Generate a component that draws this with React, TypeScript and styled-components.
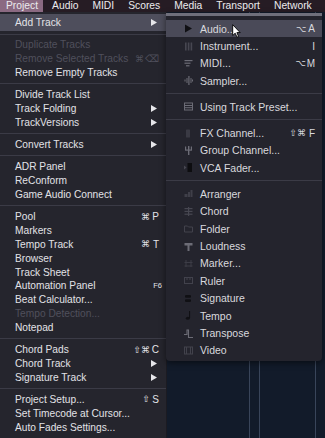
import React from "react";
import styled, { createGlobalStyle } from "styled-components";

type Shortcut = { mods?: string; key: string; small?: boolean };

type MenuEntry =
  | "sep"
  | {
      label: string;
      shortcut?: Shortcut;
      arrow?: boolean;
      disabled?: boolean;
      active?: boolean;
      icon?: string;
    };

const barItems = ["Project", "Audio", "MIDI", "Scores", "Media", "Transport", "Network"];

const projectMenu: MenuEntry[] = [
  { label: "Add Track", arrow: true, active: true },
  "sep",
  { label: "Duplicate Tracks", disabled: true },
  { label: "Remove Selected Tracks", disabled: true, shortcut: { mods: "⌘", key: "⌫" } },
  { label: "Remove Empty Tracks" },
  "sep",
  { label: "Divide Track List" },
  { label: "Track Folding", arrow: true },
  { label: "TrackVersions", arrow: true },
  "sep",
  { label: "Convert Tracks", arrow: true },
  "sep",
  { label: "ADR Panel" },
  { label: "ReConform" },
  { label: "Game Audio Connect" },
  "sep",
  { label: "Pool", shortcut: { mods: "⌘", key: "P" } },
  { label: "Markers" },
  { label: "Tempo Track", shortcut: { mods: "⌘", key: "T" } },
  { label: "Browser" },
  { label: "Track Sheet" },
  { label: "Automation Panel", shortcut: { key: "F6", small: true } },
  { label: "Beat Calculator..." },
  { label: "Tempo Detection...", disabled: true },
  { label: "Notepad" },
  "sep",
  { label: "Chord Pads", shortcut: { mods: "⇧⌘", key: "C" } },
  { label: "Chord Track", arrow: true },
  { label: "Signature Track", arrow: true },
  "sep",
  { label: "Project Setup...", shortcut: { mods: "⇧", key: "S" } },
  { label: "Set Timecode at Cursor..." },
  { label: "Auto Fades Settings..." },
];

const trackMenu: MenuEntry[] = [
  { label: "Audio...", icon: "audio", active: true, shortcut: { mods: "⌥", key: "A" } },
  { label: "Instrument...", icon: "instrument", shortcut: { key: "I" } },
  { label: "MIDI...", icon: "midi", shortcut: { mods: "⌥", key: "M" } },
  { label: "Sampler...", icon: "sampler" },
  "sep",
  { label: "Using Track Preset...", icon: "preset" },
  "sep",
  { label: "FX Channel...", icon: "fx", shortcut: { mods: "⇧⌘", key: "F" } },
  { label: "Group Channel...", icon: "group" },
  { label: "VCA Fader...", icon: "vca" },
  "sep",
  { label: "Arranger", icon: "arranger" },
  { label: "Chord", icon: "chord" },
  { label: "Folder", icon: "folder" },
  { label: "Loudness", icon: "loudness" },
  { label: "Marker...", icon: "marker" },
  { label: "Ruler", icon: "ruler" },
  { label: "Signature", icon: "signature" },
  { label: "Tempo", icon: "tempo" },
  { label: "Transpose", icon: "transpose" },
  { label: "Video", icon: "video" },
];

const GlobalStyle = createGlobalStyle`
  html, body {
    margin: 0;
    padding: 0;
    background: #121b2a;
    overflow: hidden;
  }
  body {
    font-family: "Liberation Sans", Arial, sans-serif;
  }
`;

const Screen = styled.div`
  width: 325px;
  height: 438px;
  display: flex;
  flex-direction: column;
  overflow: hidden;
  position: relative;
`;

const MenuBar = styled.div`
  height: 12px;
  display: flex;
  align-items: center;
  background: #261c24;
  gap: 3px;
`;

const BarItem = styled.div<{ $active?: boolean }>`
  height: 12px;
  line-height: 12px;
  padding: 0 5px 0 6px;
  font-size: 10.3px;
  color: #ecebee;
  background: ${(p) => (p.$active ? "#8b6a82" : "transparent")};
`;

const Workspace = styled.div`
  flex: 1;
  display: flex;
  min-height: 0;
`;

const MainMenu = styled.div`
  width: 167px;
  flex-shrink: 0;
  background: #25252d;
  padding-top: 2px;
  border-right: 1px solid #1b1b22;
  box-sizing: border-box;
`;

const Backdrop = styled.div`
  flex: 1;
  padding-top: 1px;
  background:
    linear-gradient(#39455a, #39455a) 82px 0 / 1px 100% no-repeat,
    linear-gradient(#39455a, #39455a) 92px 0 / 1px 100% no-repeat,
    linear-gradient(#39455a, #39455a) 148px 0 / 1px 100% no-repeat,
    #121b2a;
`;

const SubMenu = styled.div`
  width: 156px;
  margin-left: -1px;
  background: #24242d;
  border-top: 3px solid #6f6f7b;
  padding: 4px 0 2px;
  border-radius: 0 0 4px 4px;
  box-shadow: 0 2px 6px rgba(0, 0, 0, 0.5);
`;

const Row = styled.div<{ $active?: boolean; $disabled?: boolean; $tall?: boolean }>`
  display: flex;
  align-items: center;
  height: ${(p) => (p.$tall ? "17px" : "13.8px")};
  padding: 0 7px 0 15px;
  font-size: 10.2px;
  color: ${(p) => (p.$disabled ? "#50505c" : "#e2e2e7")};
  background: ${(p) => (p.$active ? "#4e4e5c" : "transparent")};
  white-space: nowrap;
`;

const SubRow = styled.div<{ $active?: boolean }>`
  display: flex;
  align-items: center;
  height: 17.4px;
  padding: 0 7px 0 18px;
  font-size: 10.5px;
  color: #d9d9de;
  background: ${(p) => (p.$active ? "#4a4a58" : "transparent")};
  white-space: nowrap;
`;

const Label = styled.span`
  flex: 1;
`;

const IconBox = styled.span`
  width: 9px;
  height: 9px;
  margin-right: 7px;
  display: flex;
`;

const Separator = styled.div<{ $size: number }>`
  height: ${(p) => p.$size}px;
  display: flex;
  align-items: center;
  &::after {
    content: "";
    flex: 1;
    height: 1px;
    background: #3b3b46;
  }
`;

const Keys = styled.span<{ $small?: boolean }>`
  display: flex;
  align-items: center;
  gap: 1px;
  font-size: ${(p) => (p.$small ? "7.5px" : "10px")};
  margin-right: ${(p) => (p.$small ? "-3px" : "0")};
  font-family: "DejaVu Sans", "Liberation Sans", sans-serif;
`;

const Mods = styled.span`
  font-size: 9px;
`;

const KeyCap = styled.span`
  min-width: 8px;
  text-align: right;
  font-family: "Liberation Sans", Arial, sans-serif;
`;

const Arrow = styled.svg`
  width: 6px;
  height: 7px;
  margin-right: 2px;
`;

const Cursor = styled.svg`
  position: absolute;
  left: 232px;
  top: 24px;
  width: 9px;
  height: 14px;
`;

function ShortcutKeys({ shortcut }: { shortcut: Shortcut }) {
  return (
    <Keys $small={shortcut.small}>
      {shortcut.mods && <Mods>{shortcut.mods}</Mods>}
      <KeyCap>{shortcut.key}</KeyCap>
    </Keys>
  );
}

function SubmenuArrow() {
  return (
    <Arrow viewBox="0 0 6 7">
      <path d="M0 0 L6 3.5 L0 7 Z" fill="#e6e6ea" />
    </Arrow>
  );
}

function TrackIcon({ name }: { name: string }) {
  const g = "#6c6c76";
  const d = "#474751";
  let body: React.ReactNode = null;
  switch (name) {
    case "audio":
      body = <path d="M1 0.5 L8 4.5 L1 8.5 Z" fill="#101014" />;
      break;
    case "instrument":
      body = (
        <g fill={d}>
          <rect x="1" y="0.5" width="1.6" height="8" />
          <rect x="3.8" y="0.5" width="1.6" height="8" />
          <rect x="6.6" y="0.5" width="1.6" height="8" />
        </g>
      );
      break;
    case "midi":
      body = (
        <g fill={g}>
          <rect x="0.5" y="1" width="8" height="1.2" />
          <rect x="0.5" y="3.6" width="6" height="1.2" />
          <rect x="2" y="6.2" width="3.5" height="1.2" />
        </g>
      );
      break;
    case "sampler":
      body = (
        <g fill={g}>
          <rect x="0.5" y="3.5" width="1" height="2" />
          <rect x="2.5" y="2" width="1" height="5" />
          <rect x="4.3" y="0" width="1.2" height="9" />
          <rect x="6.5" y="2" width="1" height="5" />
          <rect x="8" y="3.5" width="1" height="2" />
        </g>
      );
      break;
    case "preset":
      body = (
        <g fill="none" stroke={g} strokeWidth="1">
          <rect x="0.5" y="1" width="8" height="7" />
          <path d="M0.5 3.5 H8.5 M0.5 5.7 H8.5" />
        </g>
      );
      break;
    case "fx":
      body = <rect x="2" y="0.5" width="4" height="8" rx="0.5" fill="#3a3a44" />;
      break;
    case "group":
      body = (
        <g fill={g}>
          <rect x="1" y="0.5" width="1.2" height="3.5" />
          <rect x="4" y="0" width="1.4" height="9" />
          <rect x="6.8" y="0.5" width="1.2" height="3.5" />
          <rect x="1" y="3.5" width="7" height="1.2" />
        </g>
      );
      break;
    case "vca":
      body = (
        <g>
          <path d="M0 2.5 L2.5 4.5 L0 6.5 Z" fill={d} />
          <rect x="3.5" y="0" width="4.5" height="9" fill="#0d0d10" />
        </g>
      );
      break;
    case "arranger":
      body = (
        <g fill="#3f3f49">
          <rect x="0.5" y="5" width="3" height="3" />
          <rect x="4" y="3" width="2" height="5" />
          <rect x="6.5" y="1" width="2" height="7" />
        </g>
      );
      break;
    case "chord":
      body = (
        <g fill={d}>
          <rect x="0.5" y="1" width="8" height="1.2" />
          <rect x="0.5" y="3.8" width="8" height="1.2" />
          <rect x="0.5" y="6.6" width="8" height="1.2" />
          <rect x="4" y="0" width="1.2" height="9" />
        </g>
      );
      break;
    case "folder":
      body = (
        <path
          d="M0.5 2 H3.5 L4.5 3 H8.5 V8 H0.5 Z"
          fill="none"
          stroke="#42424c"
          strokeWidth="1"
        />
      );
      break;
    case "loudness":
      body = (
        <g fill={g}>
          <rect x="0.5" y="1" width="8" height="2.5" />
          <rect x="3.5" y="3" width="2" height="6" />
        </g>
      );
      break;
    case "marker":
      body = (
        <g fill="#3c3c46">
          <rect x="0.5" y="3" width="8" height="1" />
          <rect x="0.5" y="6.5" width="8" height="1" />
          <rect x="1.5" y="1" width="1" height="7" />
          <rect x="6.5" y="1" width="1" height="7" />
        </g>
      );
      break;
    case "ruler":
      body = (
        <g fill="none" stroke="#42424c" strokeWidth="1">
          <rect x="0.5" y="1.5" width="8" height="6" />
          <path d="M3 1.5 V4 M6 1.5 V4" />
        </g>
      );
      break;
    case "signature":
      body = (
        <g fill="#101014">
          <rect x="1" y="1" width="6" height="2.8" rx="1" />
          <rect x="1" y="5.2" width="6" height="2.8" rx="1" />
        </g>
      );
      break;
    case "tempo":
      body = (
        <g fill="#101014">
          <rect x="5" y="0" width="1.1" height="7" />
          <ellipse cx="3.8" cy="7.2" rx="2" ry="1.5" />
        </g>
      );
      break;
    case "transpose":
      body = <path d="M0 5.5 H3 V1 H4.5 V8.5 H9" fill="none" stroke={g} strokeWidth="1.1" />;
      break;
    case "video":
      body = (
        <g fill="none" stroke="#42424c" strokeWidth="1">
          <rect x="0.5" y="1" width="8" height="7" />
          <path d="M2.5 1 V8 M6.5 1 V8" />
        </g>
      );
      break;
  }
  return (
    <IconBox>
      <svg width="9" height="9" viewBox="0 0 9 9">
        {body}
      </svg>
    </IconBox>
  );
}

function ProjectMenu() {
  return (
    <MainMenu>
      {projectMenu.map((entry, i) => {
        if (entry === "sep") {
          return <Separator key={i} $size={i === 1 ? 7 : 8.5} />;
        }
        return (
          <Row key={i} $active={entry.active} $disabled={entry.disabled} $tall={entry.active}>
            <Label>{entry.label}</Label>
            {entry.shortcut && <ShortcutKeys shortcut={entry.shortcut} />}
            {entry.arrow && <SubmenuArrow />}
          </Row>
        );
      })}
    </MainMenu>
  );
}

function AddTrackMenu() {
  return (
    <SubMenu>
      {trackMenu.map((entry, i) => {
        if (entry === "sep") {
          return <Separator key={i} $size={8.7} />;
        }
        return (
          <SubRow key={i} $active={entry.active}>
            {entry.icon && <TrackIcon name={entry.icon} />}
            <Label>{entry.label}</Label>
            {entry.shortcut && <ShortcutKeys shortcut={entry.shortcut} />}
          </SubRow>
        );
      })}
    </SubMenu>
  );
}

export default function App() {
  return (
    <>
      <GlobalStyle />
      <Screen>
        <MenuBar>
          {barItems.map((item, i) => (
            <BarItem key={item} $active={i === 0}>
              {item}
            </BarItem>
          ))}
        </MenuBar>
        <Workspace>
          <ProjectMenu />
          <Backdrop>
            <AddTrackMenu />
          </Backdrop>
        </Workspace>
        <Cursor viewBox="0 0 9 14">
          <path
            d="M0.7 0.7 V11.5 L3.2 9.2 L5 13.2 L6.6 12.5 L4.9 8.6 H8.2 Z"
            fill="#ffffff"
            stroke="#000000"
            strokeWidth="0.9"
            strokeLinejoin="round"
          />
        </Cursor>
      </Screen>
    </>
  );
}
